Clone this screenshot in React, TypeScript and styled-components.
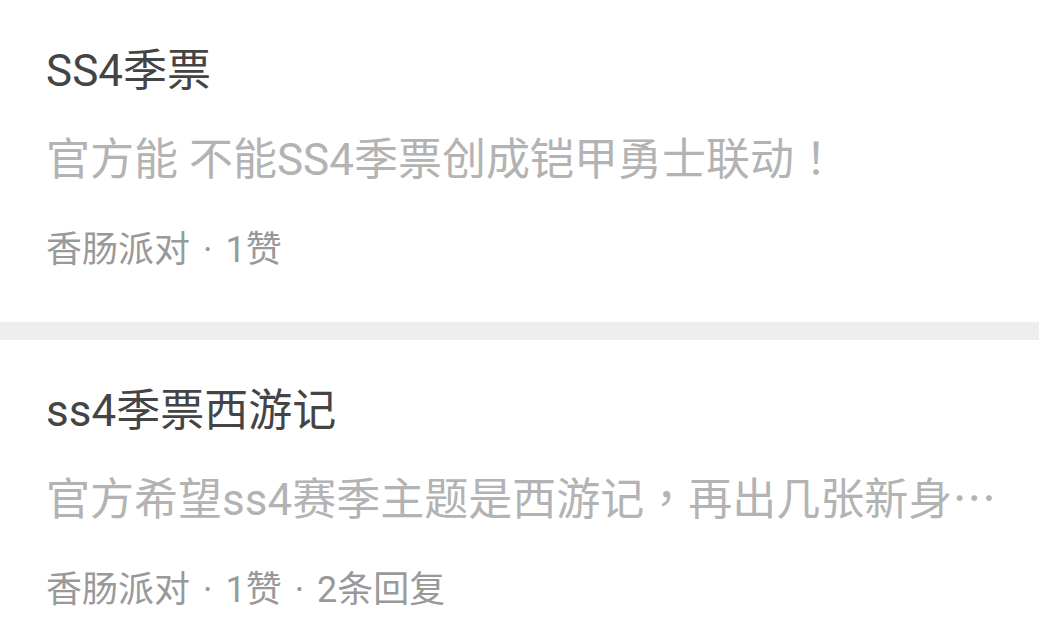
import React from "react";
import styled, { createGlobalStyle } from "styled-components";

const GlobalStyle = createGlobalStyle`
  html, body {
    margin: 0;
    padding: 0;
    background: #ffffff;
    overflow: hidden;
  }
  body {
    font-family: Roboto, "Noto Sans CJK SC", sans-serif;
  }
`;

const List = styled.div`
  display: flex;
  flex-direction: column;
  width: 1039px;
  height: 626px;
  overflow: hidden;
`;

const Card = styled.div`
  display: flex;
  flex-direction: column;
  flex-shrink: 0;
  padding: 40px 30px 44px 46px;
  background: #ffffff;
`;

const Divider = styled.div`
  flex-shrink: 0;
  height: 18px;
  background: #eeeeee;
`;

const Title = styled.div`
  font-size: 44px;
  line-height: 62px;
  color: #444444;
`;

const Desc = styled.div`
  margin-top: 27px;
  height: 62px;
  font-size: 44px;
  line-height: 62px;
  color: #b3b3b3;
  white-space: nowrap;
`;

// punctuation sits centred in its cell, as in the reference
const Punct = styled.span`
  font-family: "Noto Sans CJK TC", sans-serif;
  line-height: 0;
`;

const Meta = styled.div`
  margin-top: 31px;
  font-size: 36px;
  line-height: 56px;
  color: #999999;
`;

const Sep = styled.span`
  padding: 0 13px;
`;

type Post = { title: string; desc: React.ReactNode; meta: string[] };

const posts: Post[] = [
  {
    title: "SS4季票",
    desc: (
      <>
        官方能 不能SS4季票创成铠甲勇士联动<Punct>！</Punct>
      </>
    ),
    meta: ["香肠派对", "1赞"],
  },
  {
    title: "ss4季票西游记",
    desc: (
      <>
        官方希望ss4赛季主题是西游记<Punct>，</Punct>再出几张新身<Punct>…</Punct>
      </>
    ),
    meta: ["香肠派对", "1赞", "2条回复"],
  },
];

const App: React.FC = () => {
  return (
    <>
      <GlobalStyle />
      <List>
        {posts.map((p, i) => (
          <React.Fragment key={i}>
            {i > 0 && <Divider />}
            <Card>
              <Title>{p.title}</Title>
              <Desc>{p.desc}</Desc>
              <Meta>
                {p.meta.map((m, j) => (
                  <React.Fragment key={j}>
                    {j > 0 && <Sep>·</Sep>}
                    {m}
                  </React.Fragment>
                ))}
              </Meta>
            </Card>
          </React.Fragment>
        ))}
      </List>
    </>
  );
};

export default App;
